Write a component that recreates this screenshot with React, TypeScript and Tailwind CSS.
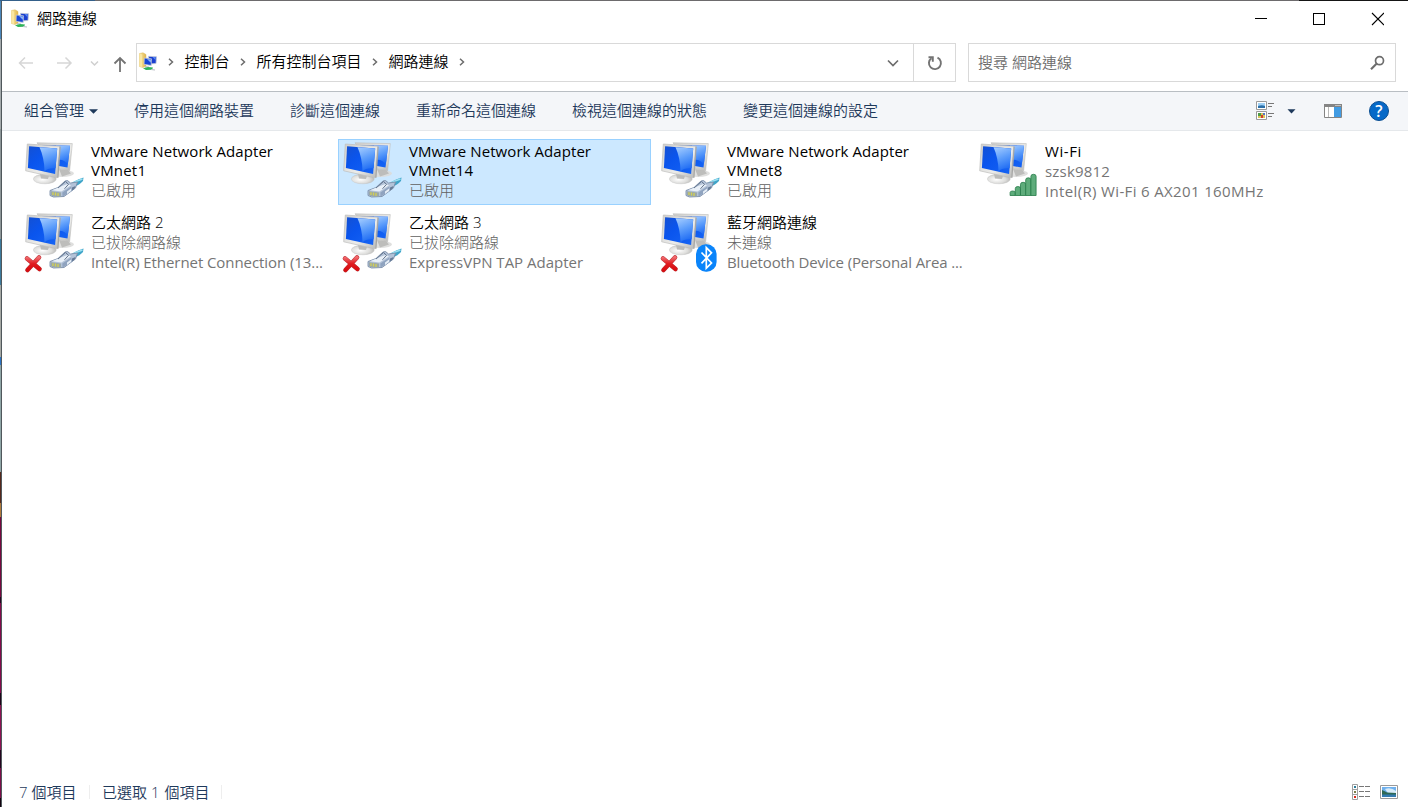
import React from 'react';

type Badge = 'plug' | 'wifi' | 'bluetooth';

interface Line {
  text: string;
  latin?: string;
}

interface Connection {
  title: Line[];
  details: Line[];
  badge: Badge;
  badgeOff?: boolean;
  selected?: boolean;
}

const connections: Connection[] = [
  { title: [{ text: 'VMware Network Adapter', latin: 'tracking-[0.07px]' }, { text: 'VMnet1', latin: 'tracking-[0.2px]' }], details: [{ text: '已啟用' }], badge: 'plug' },
  { title: [{ text: 'VMware Network Adapter', latin: 'tracking-[0.07px]' }, { text: 'VMnet14', latin: 'tracking-[0.25px]' }], details: [{ text: '已啟用' }], badge: 'plug', selected: true },
  { title: [{ text: 'VMware Network Adapter', latin: 'tracking-[0.07px]' }, { text: 'VMnet8', latin: 'tracking-[0.25px]' }], details: [{ text: '已啟用' }], badge: 'plug' },
  { title: [{ text: 'Wi-Fi', latin: 'tracking-[0.6px]' }], details: [{ text: 'szsk9812', latin: 'tracking-[0.2px]' }, { text: 'Intel(R) Wi-Fi 6 AX201 160MHz', latin: 'tracking-[0.35px]' }], badge: 'wifi' },
  { title: [{ text: '乙太網路 2' }], details: [{ text: '已拔除網路線' }, { text: 'Intel(R) Ethernet Connection (13...', latin: 'tracking-[-0.07px]' }], badge: 'plug', badgeOff: true },
  { title: [{ text: '乙太網路 3' }], details: [{ text: '已拔除網路線' }, { text: 'ExpressVPN TAP Adapter', latin: 'tracking-normal' }], badge: 'plug', badgeOff: true },
  { title: [{ text: '藍牙網路連線' }], details: [{ text: '未連線' }, { text: 'Bluetooth Device (Personal Area ...', latin: 'tracking-[-0.14px]' }], badge: 'bluetooth', badgeOff: true },
];

function Gradients() {
  return (
    <svg width="0" height="0" className="absolute">
      <defs>
        <linearGradient id="screen" x1="0" y1="0" x2="1" y2="1">
          <stop offset="0" stopColor="#1450d2" />
          <stop offset="0.4" stopColor="#0a55ee" />
          <stop offset="1" stopColor="#1664f4" />
        </linearGradient>
        <linearGradient id="glare" x1="0.1" y1="0" x2="0.4" y2="1">
          <stop offset="0" stopColor="#a4ccff" />
          <stop offset="0.5" stopColor="#5c9dfb" />
          <stop offset="1" stopColor="#1f6cf4" />
        </linearGradient>
        <linearGradient id="frame" x1="0" y1="0" x2="1" y2="1">
          <stop offset="0" stopColor="#cfcfcd" />
          <stop offset="0.6" stopColor="#ececea" />
          <stop offset="1" stopColor="#b8b8b6" />
        </linearGradient>
        <radialGradient id="base" cx="0.4" cy="0.55" r="0.65">
          <stop offset="0" stopColor="#ffffff" />
          <stop offset="0.6" stopColor="#dededc" />
          <stop offset="1" stopColor="#b2b2b0" />
        </radialGradient>
        <linearGradient id="cross" x1="0" y1="0" x2="0" y2="1">
          <stop offset="0" stopColor="#f0686c" />
          <stop offset="0.5" stopColor="#e01c20" />
          <stop offset="1" stopColor="#d80c10" />
        </linearGradient>
        <linearGradient id="folder" x1="0" y1="0" x2="1" y2="0">
          <stop offset="0" stopColor="#fbe9a0" />
          <stop offset="1" stopColor="#dfb44c" />
        </linearGradient>
      </defs>
    </svg>
  );
}

function ConnectionIcon({ badge, off }: { badge: Badge; off?: boolean }) {
  return (
    <svg width="70" height="64" viewBox="1 4 70 64" className="shrink-0">
      <ellipse cx="42" cy="37.5" rx="12" ry="3.4" fill="#dcdcda" opacity="0.9" />
      <path d="M39 33l9 1 3 3.500-9 3z" fill="#bdbdbb" />
      <path d="M17 6.800L52.300 7.600l-2.700 27.200L36 32z" fill="url(#frame)" stroke="#bcbcba" strokeWidth="0.6" />
      <path d="M19.300 8.900L50 9.800l-2.500 21.800L36 29.500z" fill="url(#screen)" />
      <path d="M36 9.400l14 .4-2.200 19C46 25 41 23 38 24z" fill="url(#glare)" />
      <ellipse cx="24.800" cy="43" rx="11.500" ry="4.800" fill="url(#base)" stroke="#c6c6c4" strokeWidth="0.4" />
      <path d="M20 38l9 1.800-1 3.200-7-.6z" fill="#bcbcba" />
      <path d="M7.300 8L39.700 10.300l-2.500 31.500L5.700 34.800z" fill="url(#frame)" stroke="#bdbdbb" strokeWidth="0.7" />
      <path d="M37.200 41.800L39.700 10.300l1 .5-2.200 31z" fill="#a6a6a4" />
      <path d="M9.100 10.300l28.100 2.200-2.100 25.500L7.900 32z" fill="url(#screen)" />
      <path d="M19.500 11.200l17.700 1.300-1.600 19.800C30 32 26.500 33 24.500 35.500 24.500 26 22.500 18 19.500 11.200z" fill="url(#glare)" />
      {badge === 'plug' && (
        <g>
          <path d="M50 48.500c3-2.500 6-4.500 13.500-7l-.5 3.500c-3 3-5 4.500-9 5.500z" fill="#3fa4c8" />
          <path d="M52 47.500c3-2 6-3 10.500-4.500" stroke="#9be0f2" strokeWidth="1.500" fill="none" />
          <path d="M30 54.500l8-3 7-6.500 2.500-.5 3 2.500 7-1-2 6-11.500 8.500-10.500.5-3.500-1.500z" fill="#b4c3d8" stroke="#7c8fa9" strokeWidth="0.900" strokeLinejoin="round" />
          <path d="M32 54.300l9.500 1.200 9.500-6.200-3.500-1.200-5.500 2z" fill="#e9f0f8" />
          <path d="M42.300 56.500l9-6 .2 4.500-9 5.500z" fill="#8fa3bf" />
          <path d="M38 52l7.500-6.500 3 2.800-4 4.500" fill="none" stroke="#62748d" strokeWidth="1" />
          <path d="M47 55.500l4-3v2.500l-4 3z" fill="#e6eef6" />
          <path d="M52 51.500l3.500-1.500-.8 2.500-2.700 2z" fill="#667b96" />
          <path d="M31 55.200l10 1.300v4.200l-8.500-.6L31 59z" fill="#9aa8a8" />
          <path d="M33 56.300v2.700M35.500 56.600v3M38 57v3" stroke="#d3d052" strokeWidth="1.300" />
        </g>
      )}
      {badge === 'wifi' && (
        <g fill="#5eac7b" stroke="#257b48" strokeWidth="0.800" transform="translate(5.600 -1)">
          <path d="M30.500 57.500q0-1.500 2.600-1.500t2.600 1.500v3h-5.200z" />
          <path d="M35.700 53.500q0-2 2.600-2t2.600 2v7h-5.200z" />
          <path d="M40.900 49.300q0-2 2.600-2t2.600 2v11.200h-5.200z" />
          <path d="M46.100 44.800q0-2 2.600-2t2.600 2v15.700h-5.200z" />
          <path d="M51.300 41.300q0-2 2.600-2t2.600 2v19.200h-5.200z" />
        </g>
      )}
      {badge === 'bluetooth' && (
        <g>
          <rect x="40" y="37.300" width="20.600" height="27.400" rx="9.800" fill="#0a84fa" />
          <path d="M45.500 45.500l10 10.500-5.200 5.200V40.600l5.200 5.200-10 10.500" fill="none" stroke="#fff" strokeWidth="1.700" />
        </g>
      )}
      {off && (
        <g strokeLinecap="round" fill="none">
          <path d="M7 51.500L19.500 62M19 50.500L7.500 63" stroke="#b93438" strokeWidth="4.600" />
          <path d="M7 51.500L19.500 62M19 50.500L7.500 63" stroke="url(#cross)" strokeWidth="3.600" />
        </g>
      )}
    </svg>
  );
}

function FolderNetworkIcon() {
  return (
    <svg width="20" height="20" viewBox="1 0 20 20" className="shrink-0">
      <path d="M2.500 1.500l3.500-.7 3 1.700v11.500l-3 1.500-3.500-1z" fill="url(#folder)" stroke="#dcb95c" strokeWidth="0.500" />
      <path d="M2.500 1.500l2.700 1.300v12.500l-2.700-1z" fill="#f9e6a2" />
      <path d="M11.500 4.300l8 .4-.5 6.800-7 .5z" fill="#1a3fd0" stroke="#c6cbd8" strokeWidth="0.800" />
      <path d="M15.500 5l3.200.2-.2 3z" fill="#5b8cf5" />
      <path d="M7.300 6l7.200.8-.3 6.700L7 12.300z" fill="#1746d8" stroke="#c6cbd8" strokeWidth="0.800" />
      <path d="M10 7l4 .4-.2 3.300z" fill="#8fb8fa" />
      <path d="M8 14l4 .4v1H8z" fill="#b9bcc4" />
      <path d="M6 16.200l5-1.200 5 .6-1 2.200-6 .2z" fill="#2fb35a" />
      <path d="M14 17.500l4 .5" stroke="#b9bcc4" strokeWidth="1.200" />
    </svg>
  );
}

function Crumb() {
  return (
    <svg width="6" height="8" viewBox="0 0 6 8" className="shrink-0">
      <path d="M1 .7L4.500 4 1 7.300" fill="none" stroke="#6d6d6d" strokeWidth="1.500" />
    </svg>
  );
}

function TitleBar() {
  return (
    <div className="flex h-[36px] items-center pl-[8px]">
      <FolderNetworkIcon />
      <span className="ml-[7px] flex-1 pb-[2px] text-black">網路連線</span>
      <svg width="130" height="14" viewBox="0 0 130 14" className="mr-[24px]" fill="none" stroke="#000" shapeRendering="crispEdges">
        <path d="M1 6.500h12M59.500 1.500h11v11h-11z" />
        <path d="M118 1l12 12M130 1l-12 12" shapeRendering="auto" strokeWidth="1.100" />
      </svg>
    </div>
  );
}

function NavigationBar() {
  return (
    <div className="flex h-[54px] pt-[6px] pr-[12px]">
      <svg width="134" height="39" viewBox="0 0 134 39" fill="none" className="shrink-0">
        <path d="M31 20H17.500M23 14.500L17.500 20l5.500 5.500" stroke="#d6d6d6" strokeWidth="1.500" />
        <path d="M55 20h14M63.500 14.500L69 20l-5.500 5.500" stroke="#d6d6d6" strokeWidth="1.500" />
        <path d="M89 18.500l3.500 3.500 3.500-3.500" stroke="#cfcfcf" strokeWidth="1.500" />
        <path d="M118 29V15M112.500 20.500L118 15l5.500 5.500" stroke="#737373" strokeWidth="1.800" />
      </svg>
      <div className="flex h-[39px] w-[820px] items-center border border-[#d9d9d9] text-black">
        <div className="flex flex-1 items-center pl-px pb-[2px]">
          <FolderNetworkIcon />
          <span className="ml-[10px] flex items-center gap-[10.500px]">
            <Crumb />
            <span className="pb-[2px]">控制台</span>
            <Crumb />
            <span className="pb-[2px]">所有控制台項目</span>
            <Crumb />
            <span className="pb-[2px]">網路連線</span>
            <Crumb />
          </span>
        </div>
        <svg width="12" height="8" viewBox="0 0 12 8" className="mr-[14px]" fill="none">
          <path d="M1 1.500l5 5 5-5" stroke="#6d6d6d" strokeWidth="1.700" />
        </svg>
        <div className="flex h-full w-[42px] items-center justify-center border-l border-[#d9d9d9]">
          <svg width="16" height="16" viewBox="0 0 16 16" fill="none" stroke="#737373" strokeWidth="1.900">
            <path d="M10.500 2.700A6 6 0 1 1 4.500 3.200" />
            <path d="M1.500 2.200h4.300v4.500" />
          </svg>
        </div>
      </div>
      <div className="ml-[12px] flex h-[39px] flex-1 items-center border border-[#d9d9d9] px-[9px] text-[#6d6d6d]">
        <span className="flex-1 pb-[2px]">搜尋 網路連線</span>
        <svg width="16" height="16" viewBox="0 0 16 16" fill="none" stroke="#6d6d6d">
          <circle cx="9.500" cy="5.700" r="4" strokeWidth="1.700" />
          <path d="M6.500 8.700L1 14.200" strokeWidth="2.200" />
        </svg>
      </div>
    </div>
  );
}

const actions = ['停用這個網路裝置', '診斷這個連線', '重新命名這個連線', '檢視這個連線的狀態', '變更這個連線的設定'];

function Toolbar() {
  return (
    <div className="flex h-[40px] items-center border-t border-b border-t-[#b9bec3] border-b-[#e5e8eb] bg-[#f4f6f9] pl-[22px] text-[#1e395b]">
      <div className="flex flex-1 items-center gap-[36px]">
        <span className="flex items-center gap-[5px]">
          <span className="pb-[2px]">組合管理</span>
          <svg width="9" height="5" viewBox="0 0 9 5"><path d="M0 .3h9L4.500 4.800z" fill="#1e395b" /></svg>
        </span>
        {actions.map((a) => <span key={a} className="pb-[2px]">{a}</span>)}
      </div>
      <svg width="19" height="20" viewBox="0 0 19 20">
        <path d="M.5.500h10v8H.5zM.5 10.500h10v8H.5z" fill="#fff" stroke="#9a9a9a" />
        <path d="M2 2h7v5H2z" fill="#9fd0f5" />
        <path d="M2 5q4-1.500 7 0v2H2z" fill="#2b6fa8" />
        <path d="M2 12h7v5H2z" fill="#d9c65a" />
        <path d="M2 12h3v3H2z" fill="#4d9a48" /><path d="M5 14h2v3H5z" fill="#d2402c" /><path d="M7 12h2v2H7z" fill="#5477c4" />
        <path d="M12 2.500h6M12 5.500h4M12 12.500h6M12 15.500h4" stroke="#777" />
      </svg>
      <svg width="9" height="5" viewBox="0 0 9 5" className="ml-[12px]"><path d="M.5 .3h8L4.500 4.500z" fill="#1e395b" /></svg>
      <svg width="18" height="14" viewBox="0 0 18 14" className="ml-[28px]">
        <path d="M.5.5h17v13H.5z" fill="#fff" stroke="#858585" />
        <path d="M0 0h18v3H0z" fill="#858585" />
        <path d="M11.500 1.500h1M13.500 1.500h1M15.500 1.500h1" stroke="#fff" />
        <path d="M4.500 3v10" stroke="#b8b8b8" />
        <path d="M10 3h7v10h-7z" fill="#429ce3" />
      </svg>
      <span className="mr-[19px] ml-[27px] flex h-[20px] w-[20px] items-center justify-center rounded-full border border-[#0b4f92] bg-[#0669c8] text-[16px] leading-none font-semibold text-white">?</span>
    </div>
  );
}

function TextLine({ line, className }: { line: Line; className: string }) {
  return <span className={className + (line.latin ? ' font-normal ' + line.latin : '')}>{line.text}</span>;
}

function ConnectionTile({ item }: { item: Connection }) {
  const wrapped = item.title.length > 1;
  return (
    <div className={'flex h-[66px] border ' + (item.selected ? 'border-[#99d1ff] bg-[#cce8ff]' : 'border-transparent')}>
      <ConnectionIcon badge={item.badge} off={item.badgeOff} />
      <div className={'flex min-w-0 flex-col whitespace-nowrap ' + (wrapped ? 'pt-[2px]' : 'pt-px')}>
        {item.title.map((t) => (
          <TextLine key={t.text} line={t} className={(wrapped ? 'h-[19px] leading-[19px]' : 'h-[20px] leading-[20px]') + ' text-black'} />
        ))}
        <div className="flex flex-col font-light text-[#606060]">
          {item.details.map((t) => (
            <TextLine key={t.text} line={t} className={'h-[20px] leading-[20px]' + (t.latin ? ' text-[#757575]' : '')} />
          ))}
        </div>
      </div>
    </div>
  );
}

function StatusBar() {
  return (
    <div className="flex h-[30px] items-center pl-[17px] pr-[10px] text-[#1e395b]">
      <span className="w-[70px] pb-px">7 個項目</span>
      <span className="h-[14px] w-px bg-[#eeeeee]" />
      <span className="ml-[12px] w-[119px] pb-px">
        已選取<span className="mr-px"> 1 </span>個項目
      </span>
      <span className="h-[14px] w-px bg-[#eeeeee]" />
      <span className="flex-1" />
      <svg width="19" height="16" viewBox="0 0 19 16">
        <path d="M.5.500h5v15h-5zM.5 5.500h5M.5 10.500h5" fill="#fff" stroke="#a0a0a0" />
        <path d="M2 2h2v2H2z" fill="#2b7d9b" /><path d="M2 7h2v2H2z" fill="#7b7f48" /><path d="M2 12h2v2H2z" fill="#d9281c" />
        <path d="M7 2.500h5M13 2.500h5M7 7.500h5M13 7.500h5M7 12.500h5M13 12.500h5" stroke="#777" />
      </svg>
      <svg width="18" height="14" viewBox="0 0 18 14" className="ml-[9px]">
        <path d="M.5.500h17v13H.5z" fill="#fff" stroke="#9a9a9a" />
        <path d="M2 2h14v10H2z" fill="#70b1ee" />
        <path d="M5 4q6-2 11 2v2H8z" fill="#d7ebf8" />
        <path d="M2 5q3 1 5 2.500l9 .5v2H2z" fill="#2f6955" />
        <path d="M2 9.500h14V12H2z" fill="#347bb0" />
      </svg>
    </div>
  );
}

const edgeColors = [
  { h: 38, c: 'bg-[#4a86ba]' }, { h: 90, c: 'bg-[#a4aaac]' }, { h: 110, c: 'bg-[#8d9698]' },
  { h: 46, c: 'bg-[#3d7a9c]' }, { h: 72, c: 'bg-[#a5a8a4]' }, { h: 8, c: 'bg-[#2c73c4]' },
  { h: 107, c: 'bg-[#8fa5a6]' }, { h: 31, c: 'bg-[#55281c]' }, { h: 14, c: 'bg-[#b07a3a]' },
  { h: 80, c: 'bg-[#77083f]' }, { h: 6, c: 'bg-[#240520]' }, { h: 90, c: 'bg-[#820b4a]' },
  { h: 12, c: 'bg-[#1d0418]' }, { h: 45, c: 'bg-[#8c1252]' }, { h: 18, c: 'bg-[#24051e]' },
  { h: 30, c: 'bg-[#7b0e48]' }, { h: 9, c: 'bg-[#12020e]' },
];

export default function App() {
  return (
    <div className="flex h-[807px] w-[1408px] flex-col overflow-hidden bg-white font-['Open_Sans','Noto_Sans_CJK_TC',sans-serif] text-[15px] leading-[20px] font-[350]">
      <Gradients />
      <div className="flex h-px shrink-0">
        <span className="w-[95px] bg-[#34608a]" />
        <span className="flex-1 bg-[#6d6b6d]" />
        <span className="w-[109px] bg-[#151515]" />
      </div>
      <div className="flex min-h-0 flex-1">
        <div className="flex w-[2px] shrink-0 flex-col border-r border-[#50585c]">
          {edgeColors.map((e, i) => <span key={i} className={'shrink-0 ' + e.c} style={{ height: e.h }} />)}
        </div>
        <div className="flex min-w-0 flex-1 flex-col">
          <TitleBar />
          <NavigationBar />
          <Toolbar />
          <main className="grid flex-1 auto-rows-[66px] grid-cols-[313px_313px_313px_313px] content-start gap-x-[5px] gap-y-[5px] pt-[8px] pl-[18px]">
            {connections.map((c) => <ConnectionTile key={c.title.map((t) => t.text).join(' ')} item={c} />)}
          </main>
          <StatusBar />
        </div>
      </div>
    </div>
  );
}
